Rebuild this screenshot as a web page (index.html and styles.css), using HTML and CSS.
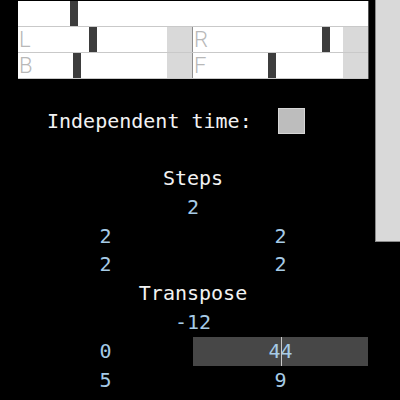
FILE: index.html
```html
<!DOCTYPE html>
<html lang="en">
<head>
    <meta charset="UTF-8">
    <meta name="viewport" content="width=device-width, initial-scale=1.0">
    <title>Sequencer</title>
    <link rel="stylesheet" href="styles.css">
</head>
<body>
    <div class="page">
        <main class="panel">
            <div class="bar">
                <div class="row">
                    <div class="cell full">
                        <div class="track"><span class="handle" style="left: 52px"></span></div>
                    </div>
                </div>
                <div class="row">
                    <div class="cell first">
                        <div class="track"><span class="tag">L</span><span class="handle" style="left: 71px"></span></div>
                        <div class="pad"></div>
                    </div>
                    <div class="cell">
                        <div class="track"><span class="tag">R</span><span class="handle" style="left: 129px"></span></div>
                        <div class="pad"></div>
                    </div>
                </div>
                <div class="row">
                    <div class="cell first">
                        <div class="track"><span class="tag">B</span><span class="handle" style="left: 55px"></span></div>
                        <div class="pad"></div>
                    </div>
                    <div class="cell">
                        <div class="track"><span class="tag">F</span><span class="handle" style="left: 75px"></span></div>
                        <div class="pad"></div>
                    </div>
                </div>
            </div>

            <div class="option">
                <span class="label">Independent time:</span>
                <span class="checkbox"></span>
            </div>

            <div class="stack">
                <div class="title">Steps</div>
                <div class="value">2</div>
                <div class="pair">
                    <span class="value">2</span>
                    <span class="value">2</span>
                </div>
                <div class="pair">
                    <span class="value">2</span>
                    <span class="value">2</span>
                </div>
                <div class="title">Transpose</div>
                <div class="value">-12</div>
                <div class="pair">
                    <span class="value">0</span>
                    <span class="slider"><span class="value">44</span><span class="mark"></span></span>
                </div>
                <div class="pair">
                    <span class="value">5</span>
                    <span class="value">9</span>
                </div>
            </div>
        </main>
        <aside class="side"></aside>
    </div>
</body>
</html>
```

FILE: styles.css
```css
body {
    margin: 0;
    background: #000;
    font-family: "DejaVu Sans Mono", monospace;
    font-size: 20px;
    color: #f2f2f2;
}
.page {
    display: flex;
    align-items: flex-start;
}
.panel {
    width: 350px;
    padding: 1px 7px 0 18px;
}
.side {
    width: 25px;
    height: 241px;
    background: #d9d9d9;
    border-left: 1px solid #8a8a8a;
    border-bottom: 1px solid #8a8a8a;
}
.bar {
    background: #fff;
    box-shadow: 1px 0 0 #555;
}
.row {
    display: flex;
    height: 25px;
    border-bottom: 1px solid #c9c9c9;
}
.cell {
    display: flex;
    width: 175px;
}
.cell.full {
    width: 350px;
}
.cell.first {
    border-right: 1px solid #8c8c8c;
    width: 174px;
}
.track {
    flex: 1;
    position: relative;
}
.pad {
    width: 25px;
    background: #d9d9d9;
}
.handle {
    position: absolute;
    top: 0;
    bottom: 0;
    width: 8px;
    background: #3d3d3d;
}
.tag {
    position: absolute;
    left: 1px;
    top: 0;
    font-family: Roboto, sans-serif;
    font-weight: 300;
    font-size: 22px;
    line-height: 25px;
    color: #b8b8b8;
}
.option {
    display: flex;
    align-items: center;
    gap: 26px;
    margin-top: 27px;
    padding-left: 29px;
    height: 29px;
}
.checkbox {
    width: 25px;
    height: 24px;
    background: #bdbdbd;
    border: 1px solid #d6d6d6;
}
.stack {
    margin-top: 29px;
    text-align: center;
    line-height: 28.8px;
}
.value {
    color: #a6cbe6;
}
.pair {
    display: grid;
    grid-template-columns: 1fr 1fr;
}
.slider {
    position: relative;
    background: #474747;
}
.mark {
    position: absolute;
    top: 0;
    bottom: 0;
    left: 88px;
    width: 1px;
    background: #c8c8c8;
}
```
